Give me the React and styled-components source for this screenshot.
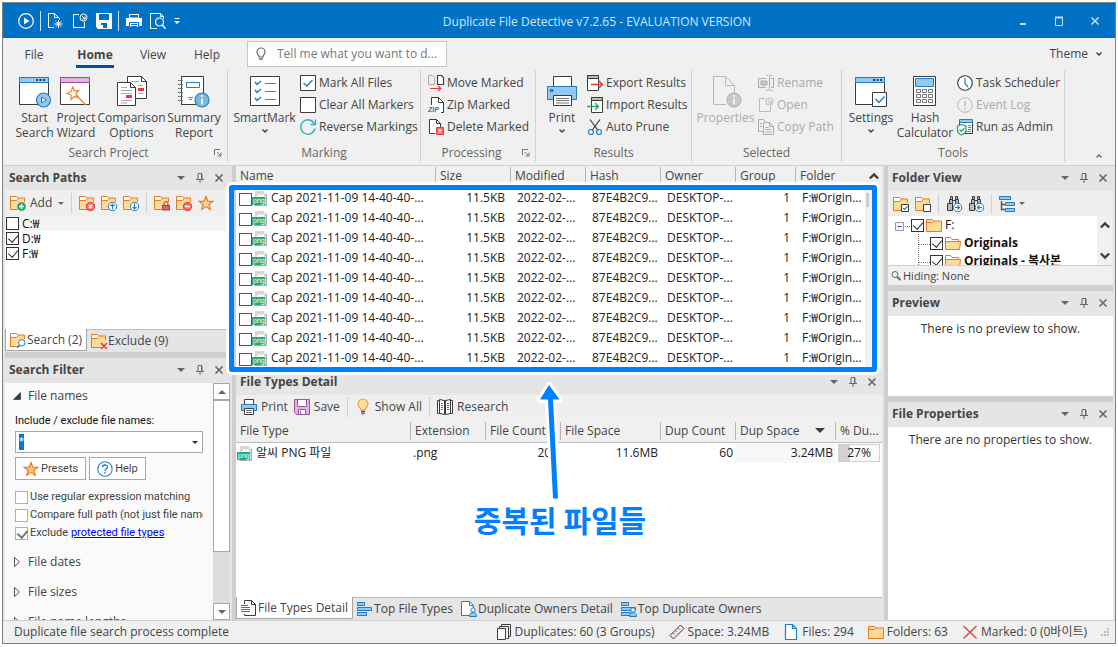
import React, { useState } from 'react';
import styled, { createGlobalStyle, css } from 'styled-components';

const GlobalStyle = createGlobalStyle`
    * {
        box-sizing: border-box;
    }
    body {
        margin: 0;
        background: #fff;
        color: #444;
        font: 12px/16px 'Open Sans', 'Noto Sans CJK KR', sans-serif;
    }
    button, input {
        font: inherit;
        color: inherit;
    }
    button {
        padding: 0;
        border: 0;
        background: none;
        white-space: nowrap;
    }
`;

const DARK = '#3b3b3b';
const BLUE = '#1e7fc4';
const SKY = '#94c8ec';
const ORANGE = '#e8792b';
const SAND = '#fbdb96';
const RED = '#e8383d';
const GREEN = '#2aa568';
const FADED = '#b9b9b9';

/* ---------- icons ---------- */

const Svg = styled.svg`
    display: block;
    flex: none;
    overflow: visible;
`;

const Icon = ({ size = 16, children, ...rest }) => (
    <Svg width={size} height={size} viewBox={`0 0 ${size} ${size}`} fill="none" stroke={DARK} aria-hidden="true" {...rest}>
        {children}
    </Svg>
);

const Caret = ({ color = '#666', width = 6, up }) => (
    <Svg width={width} height={width / 2} viewBox="0 0 6 3" aria-hidden="true">
        <path d={up ? 'M0 3h6L3 0z' : 'M0 0h6L3 3z'} fill={color} />
    </Svg>
);

const Chevron = ({ up, size = 6, color = DARK, weight = 1.4 }) => (
    <Svg width={size} height={size} viewBox="0 0 6 6" fill="none" stroke={color} strokeWidth={weight} aria-hidden="true">
        <path d={up ? 'M0.5 4.500L3 2l2.500 2.500' : 'M0.5 1.500L3 4l2.500-2.500'} />
    </Svg>
);

const FolderShape = () => (
    <>
        <path d="M.5 14.500v-13h6l1.500 1.500h6.500v9.500" fill={SAND} />
        <path d="M1 2h5.500l1 1.500-1 1.500H1z" fill="#fff" stroke="none" />
        <path d="M10 14.500H.5v-13h6l1.500 1.500h6.500v4M.5 5.500h6L8 3.500" stroke={ORANGE} />
    </>
);

const FolderIcon = ({ badge }) => (
    <Icon stroke="none">
        <FolderShape />
        {badge === 'add' && <><circle cx="11.500" cy="11.500" r="4.700" fill={GREEN} stroke="#efefef" strokeWidth=".6" /><path d="M11.500 9v5M9 11.500h5" stroke="#fff" strokeWidth="1.300" /></>}
        {badge === 'delete' && <><circle cx="11.500" cy="11.500" r="4.200" fill="#ee6a6d" stroke={RED} /><path d="M9.800 9.800l3.400 3.400M13.200 9.800l-3.400 3.400" stroke="#fff" strokeWidth="1.400" /></>}
        {badge === 'minus' && <><circle cx="11.500" cy="11.500" r="4.200" fill="#ee6a6d" stroke={RED} /><path d="M9 11.500h5" stroke="#fff" strokeWidth="1.600" /></>}
        {badge === 'up' && <><circle cx="11.500" cy="11.500" r="4.200" fill="#fff" stroke={BLUE} /><path d="M11.500 14.500v-5M9.500 11.200l2-2 2 2" stroke={BLUE} strokeWidth="1.200" /></>}
        {badge === 'down' && <><circle cx="11.500" cy="11.500" r="4.200" fill="#fff" stroke={BLUE} /><path d="M11.500 8.500v5M9.500 11.800l2 2 2-2" stroke={BLUE} strokeWidth="1.200" /></>}
        {badge === 'lock' && <><path d="M10 10.500v-2a2 2 0 0 1 4 0v2" stroke="#b5343c" /><path d="M8.500 10.500h7v4.500h-7z" fill="#d9676d" stroke="#b5343c" /></>}
        {badge === 'search' && <><circle cx="11.800" cy="10.800" r="3.200" fill="#fff" stroke={BLUE} /><path d="M9.500 13.200L7 15.700" stroke={BLUE} strokeWidth="1.300" /></>}
        {badge === 'cross' && <path d="M10 10l6 6M16 10l-6 6" stroke={RED} strokeWidth="1.500" />}
        {badge === 'checked' && <><path d="M8.500 8.500h7v7h-7z" fill="#fff" stroke={DARK} /><path d="M10 12l1.500 1.500 3-3.200" stroke={BLUE} strokeWidth="1.200" /></>}
        {badge === 'unchecked' && <path d="M8.500 8.500h7v7h-7z" fill="#fff" stroke={DARK} />}
    </Icon>
);

const OpenFolder = () => (
    <Icon>
        <path d="M.5 14.500v-12h5l1.500 2h6.500v2" fill="#fff" stroke={ORANGE} />
        <path d="M.5 14.500v-8h15l-1 8z" fill={SAND} stroke={ORANGE} />
    </Icon>
);

const ClosedFolder = () => (
    <Icon>
        <path d="M.5 14.500v-12h6l1.500 1.500h7.500v10.500z" fill={SAND} stroke={ORANGE} />
        <path d="M.5 5.500h6L8 4" fill="#fff" stroke={ORANGE} />
    </Icon>
);

const StarIcon = ({ fill = SAND }) => (
    <Icon><path d="M8 1.500l1.800 4.700 5 .2-3.900 3.100 1.400 4.900L8 11.600l-4.300 2.800 1.400-4.900L1.200 6.400l5-.2z" fill={fill} stroke={ORANGE} strokeWidth="1.200" /></Icon>
);

const PngIcon = () => (
    <Icon stroke="none">
        <path d="M3 0h9l3 3v12H3z" fill="#d6d6d6" />
        <path d="M12 0l3 3h-3z" fill="#f4f4f4" />
        <path d="M14 3h1v12H2v-1h12z" fill="#ababab" />
        <path d="M4 6l3-3 2 1 2-1 2 3z" fill="#fff" />
        <path d="M0 6h13v8H0z" fill="#22aa7c" />
        <text x="1" y="12" fontSize="7" fill="#fff" fontFamily="Liberation Sans, sans-serif">png</text>
    </Icon>
);

const PlayIcon = () => (
    <Icon stroke="#fff"><circle cx="8" cy="8" r="7.300" strokeWidth="1.200" /><path d="M6 4.500l5.500 3.500L6 11.500z" fill="#fff" stroke="none" /></Icon>
);
const NewIcon = () => (
    <Icon stroke="#fff"><path d="M6 14.500H.5v-14h6l5 5v1M6.500.5v4h4" /><path d="M10.500 7v8M6.500 11h8M7.700 8.200l5.600 5.600M13.300 8.200l-5.600 5.600" /></Icon>
);
const OpenIcon = ({ color = '#fff' }) => (
    <Icon stroke={color}><path d="M7 1.500H1.500v13h11V9" /><circle cx="11.500" cy="4.500" r="3.500" /><path d="M10 3l3 3M13 3.500V6h-2.500" /></Icon>
);
const SaveIcon = () => (
    <Icon stroke="none"><path d="M0 0h16v16H2l-2-2z" fill="#fff" /><path d="M3 1h10v6H3zM5 10h6v5H5z" fill="#0072c6" /><path d="M5 12h2v3H5z" fill="#fff" /></Icon>
);
const TitlePrintIcon = () => (
    <Icon stroke="none"><path d="M3.500 1.500h9V5h-9z" stroke="#fff" /><path d="M0 5h16v8H0z" fill="#fff" /><path d="M3.500 9.500h9v5h-9z" fill="#fff" stroke="#0072c6" /><path d="M5 11.500h6M5 13.500h6" stroke="#0072c6" /></Icon>
);
const PreviewIcon = () => (
    <Icon stroke="#fff"><path d="M7 15.500H.5V.5h10l3 3v2M10.500.5v3h3" /><circle cx="9.500" cy="9" r="4" strokeWidth="1.200" /><path d="M12.300 12l3.200 3.700" strokeWidth="1.400" /></Icon>
);

const WindowFrame = ({ top = SKY, line = BLUE, wide = 30 }) => (
    <>
        <path d={`M.5 2.500h${wide - 1}v27H.5z`} fill="#fff" />
        <path d={`M.5 2.500h${wide - 1}v5H.5z`} fill={top} stroke={line} />
    </>
);

const StartIcon = () => (
    <Icon size={32}>
        <WindowFrame />
        <path d="M17 5h2M20.500 5h2M24 5h2" strokeWidth="2" />
        <circle cx="24.500" cy="25" r="7" fill={SKY} stroke={BLUE} strokeWidth="1.200" />
        <path d="M22.500 22l5 3-5 3z" fill="#e7f3fb" stroke={BLUE} />
    </Icon>
);
const WizardIcon = () => (
    <Icon size={32}>
        <WindowFrame top="#dcb8dc" line="#a04fa2" />
        <path d="M13 12l1.500 4 4-.5-2.500 3.500 2 3.500-4-1-3 3v-4.500l-4-1.500 4-2z" fill="#fff" stroke="#f08a35" strokeWidth="1.300" />
        <path d="M16 20l10 10" stroke="#f08a35" strokeWidth="1.500" />
    </Icon>
);
const CompareIcon = () => (
    <Icon size={32}>
        <path d="M11.500 1.500h14l5 5v17h-19z" fill="#fff" /><path d="M25.500 1.500v5h5" />
        <path d="M15 6.500h8M22 10.500h5M22 18.500h5" stroke="#aaa" />
        <path d="M22 13h6v3h-6z" fill={RED} stroke="none" />
        <path d="M1.500 7.500h13l5 5v18h-18z" fill="#fff" /><path d="M14.500 7.500v5h5" />
        <path d="M5 12.500h6M5 15.500h11M5 18.500h11M5 25.500h11M5 28h6" stroke="#aaa" />
        <path d="M10 20h6v3h-6z" fill={RED} stroke="none" />
    </Icon>
);
const SummaryIcon = () => (
    <Icon size={32}>
        <path d="M2.500 1.500h23v28h-23z" fill="#fff" stroke="none" />
        <path d="M3 1.500h22.500v17M3 29.500h15M3.500 1.500v28" />
        <path d="M0 5.500h5M0 9.500h5M0 13.500h5M0 17.500h5M0 21.500h5M0 25.500h5" stroke="#777" />
        <path d="M8.500 7.500h13v5h-13z" stroke={BLUE} />
        <path d="M10 22.500h5M11 24.500h3" stroke="#777" />
        <circle cx="24" cy="25" r="7" fill="#7db8e0" stroke={BLUE} strokeWidth="1.200" />
        <path d="M24 20v2M24 23.500v6" stroke="#fff" strokeWidth="1.600" />
    </Icon>
);
const SmartMarkIcon = () => (
    <Icon size={32}>
        <path d="M1.500 1.500h29v29h-29z" fill="#fff" />
        <path d="M16 8.500h11M16 16.500h11M16 24.500h11" stroke="#777" />
        <path d="M6 7l2 2.500 4-3.500M6 15l2 2.500 4-3.500M6 23l2 2.500 4-3.500" stroke={BLUE} strokeWidth="1.500" />
    </Icon>
);
const BigPrintIcon = () => (
    <Icon size={32}>
        <path d="M7.500 1.500h18v11h-18z" fill="#fff" />
        <path d="M1.500 11.500h29v13h-29z" fill={SKY} stroke={BLUE} />
        <path d="M4.500 14.500h2v2h-2z" stroke="#0b558f" />
        <path d="M7.500 20.500h18v10h-18z" fill="#fff" />
        <path d="M10 23.500h13M10 25.500h13M10 28h13" stroke="#777" />
    </Icon>
);
const PropertiesIcon = () => (
    <Icon size={32} stroke={FADED}>
        <path d="M16 29.500H3.500v-28h12l9 9V17M15.500 1.500v9h9" />
        <circle cx="24" cy="25" r="7" fill="#c9c9c9" stroke="#aaa" />
        <path d="M24 20v2M24 23.500v6" stroke="#fff" strokeWidth="1.500" />
    </Icon>
);
const SettingsIcon = () => (
    <Icon size={32}>
        <WindowFrame top={SKY} />
        <path d="M18 5h2M21.500 5h2M25 5h2" strokeWidth="2" />
        <path d="M17.500 17.500h14v14h-14z" fill="#fff" />
        <path d="M20.500 24l3.500 3.500 5.500-6" stroke={BLUE} strokeWidth="1.500" />
    </Icon>
);
const CalcIcon = () => (
    <Icon size={32}>
        <path d="M4.500 1.500h22v29h-22z" fill="#fff" />
        <path d="M6.500 3.500h18v8h-18z" fill={SKY} stroke={BLUE} />
        {[14.5, 19.5, 24.5].map((y) => (
            <path key={y} d={`M7.500 ${y}h4v3h-4zM13.500 ${y}h4v3h-4zM19.500 ${y}h4v3h-4z`} stroke="#777" />
        ))}
    </Icon>
);

const BoxIcon = ({ checked }) => (
    <Icon><path d="M.5.5h15v15H.5z" fill="#fff" />{checked && <path d="M3.500 8l3.500 3 5.500-6" stroke={BLUE} strokeWidth="1.400" />}</Icon>
);
const ReverseIcon = () => (
    <Icon stroke="#2ab3c4"><path d="M14.500 5A7.200 7.200 0 1 0 15 9.500" strokeWidth="1.400" /><path d="M15.500.5v5h-5" strokeWidth="1.400" /></Icon>
);
const MoveIcon = () => (
    <Icon><path d="M.5.5h4l2 2v7h-6z" stroke="#aaa" /><path d="M9.500.5h4l2 2v7h-6z" fill="#fff" strokeWidth="1.200" /><path d="M2 13.500h10M10 11l2.800 2.500L10 16" stroke={RED} strokeWidth="1.200" /></Icon>
);
const ZipIcon = () => (
    <Icon><path d="M3.500 8V.5h7l5 5v10H11" fill="#fff" stroke="none" /><path d="M3.500 8V.5h7l5 5v10H13M10.500.5v5h5" /><text x="0" y="15" fontSize="7" fontWeight="700" fontStyle="italic" fill={BLUE} stroke="none" fontFamily="Liberation Sans, sans-serif">ZIP</text></Icon>
);
const DeleteIcon = () => (
    <Icon><path d="M7 14.500H1.500V.5h7l4 4V8M8.500.5v4h4" fill="#fff" /><path d="M8.500 8.500h7v7h-7z" fill="#ee6a6d" stroke={RED} /><path d="M10.500 10.500l3 3M13.500 10.500l-3 3" stroke="#fff" strokeWidth="1.200" /></Icon>
);
const ExportIcon = ({ incoming }) => (
    <Icon>
        <path d={incoming ? 'M4.500.5h11v15h-11z' : 'M.5.5h11v15H.5z'} fill="#fff" />
        <path d={incoming ? 'M4.500.5h11v3h-11z' : 'M.5.5h11v3H.5z'} fill="#bbb" />
        {incoming
            ? <path d="M0 9.500h11M8 6l3.500 3.500L8 13" stroke={GREEN} strokeWidth="1.300" />
            : <path d="M4 9.500h11M12 6l3.500 3.500L12 13" stroke={RED} strokeWidth="1.300" />}
    </Icon>
);
const ScissorsIcon = () => (
    <Icon><path d="M3 .5l8 11M13 .5l-8 11" strokeWidth="1.200" /><circle cx="4" cy="13" r="2.500" stroke={BLUE} strokeWidth="1.200" /><circle cx="12" cy="13" r="2.500" stroke={BLUE} strokeWidth="1.200" /></Icon>
);
const RenameIcon = () => (
    <Icon stroke="#aaa"><path d="M8 3.500H.5v9H8M13 3.500h2.500v9H13M8.500 .5h2l1 1 1-1h2M11.500 1.500v13M8.500 15.500h2l1-1 1 1h2" /><path d="M3 6h6v4H3z" fill="#c9c9c9" /></Icon>
);
const CopyIcon = () => (
    <Icon stroke="#aaa"><path d="M5 12.500H.5v-12h5l2 2v1" /><path d="M5.500 3.500h6l4 4v8h-10zM11.500 3.500v4h4" fill="#f0f0f0" /><path d="M2 4.500h2M2 7.500h2M7.500 8.500h3M7.500 10.500h6M7.500 13h6" /></Icon>
);
const ClockIcon = () => (
    <Icon><circle cx="8" cy="8" r="7.300" fill="#fff" strokeWidth="1.100" /><path d="M8 3v5.500l3 3.500" stroke={BLUE} strokeWidth="1.200" /></Icon>
);
const EventIcon = () => (
    <Icon stroke={FADED}><circle cx="8" cy="8" r="7.300" /><path d="M8 4v5M8 10.500v2" strokeWidth="1.400" /></Icon>
);
const AdminIcon = () => (
    <Icon>
        <path d="M2.500 1.500h13v13h-13z" fill="#fff" /><path d="M2.500.5h13v3h-13z" fill={SKY} stroke={BLUE} /><path d="M11 6.500h3M11 8.500h3M11 10.500h3M9 12.500h5" stroke="#777" />
        <path d="M4.500 5.500L9 7v4c0 2.500-2 4-4.500 5C2 15 .5 13.500.5 11V7z" fill="#fff" stroke={GREEN} strokeWidth="1.300" /><path d="M2.500 10.500l1.800 1.800 3-3.300" stroke={GREEN} strokeWidth="1.300" />
    </Icon>
);
const PrintIcon = () => (
    <Icon><path d="M3.500.5h9v5h-9z" fill="#fff" /><path d="M.5 5.500h15v6H.5z" fill={SKY} stroke={BLUE} /><path d="M3.500 9.500h9v6h-9z" fill="#fff" /><path d="M5 11.500h6M5 13.500h6" stroke="#777" /></Icon>
);
const SavePurple = () => (
    <Icon stroke="#a04fa2"><path d="M.5.5h15v15h-13l-2-2z" fill="#dcb8dc" /><path d="M3.500.5h9v7h-9zM4.500 10.500h7v5h-7z" fill="#fff" /><path d="M6.500 12v3" /></Icon>
);
const BulbIcon = () => (
    <Icon stroke="#f0a04b"><path d="M6 11c0-2-3-3-3-6a5 5 0 0 1 10 0c0 3-3 4-3 6z" fill="#ffdf9a" strokeWidth="1.200" /><path d="M6 12.500h4M6.500 14.500h3" stroke="#555" strokeWidth="1.400" /></Icon>
);
const OutlineBulb = () => (
    <Icon stroke="#666"><path d="M6 11c0-2-2-2.500-2-5a4 4 0 0 1 8 0c0 2.500-2 3-2 5z" strokeWidth="1.200" /><path d="M6 13h4" strokeWidth="1.400" /></Icon>
);
const BookIcon = () => (
    <Icon><path d="M.5 1.500h15v13H.5z" fill="#fff" /><path d="M2.500.5l5 1v14l-5-1zM13.500.5l-5 1v14l5-1z" fill="#fff" /><path d="M4 4.500h2M4 6.500h2M4 8.500h2M4 10.500h2M10 4.500h2M10 6.500h2M10 8.500h2M10 10.500h2" stroke={BLUE} /></Icon>
);
const BinocularsIcon = ({ back }) => (
    <Icon>
        <path d="M3.500 3.500h3v4h-3zM9.500 3.500h3v4h-3zM4.500.5h2v3h-2zM9.500.5h2v3h-2zM1.500 7.500h5v7h-5zM9.500 7.500h4v7h-4zM6.500 4.500h3" fill="#bbb" />
        <circle cx="11.500" cy="11.500" r="4.200" fill="#fff" stroke={BLUE} />
        <path d={back ? 'M14 11.500H9.500M11.500 9.500l-2 2 2 2' : 'M9 11.500h4.500M11.500 9.500l2 2-2 2'} stroke={BLUE} strokeWidth="1.200" />
    </Icon>
);
const TreeIcon = () => (
    <Icon stroke={BLUE}><path d="M2.500 5v9.500M2.500 8.500h4M2.500 13.500h4" stroke="#555" strokeWidth="1.500" /><path d="M.5.5h11v3H.5zM6.500 6.500h9v3h-9zM6.500 12.500h9v3h-9z" fill={SKY} /></Icon>
);
const ReportIcon = () => (
    <Icon><path d="M3.500 4V.5h7l4 4v11h-11V14M10.500.5v4h4" /><path d="M0 5.500h7M0 7.500h9M0 9.500h9M0 11.500h9" stroke={BLUE} /></Icon>
);
const BarsIcon = ({ person }) => (
    <Icon stroke={BLUE}><path d="M.5 1.500h7v3h-7zM.5 6.500h14v3H.5zM.5 11.500h9v3h-9z" fill={SKY} />{person && <Person />}</Icon>
);
const Person = () => (
    <><path d="M8.500 15.500c0-3 1.500-4 3.500-4s3.500 1 3.500 4z" fill={SKY} stroke={BLUE} /><circle cx="12" cy="9" r="2.200" fill="#fff" stroke={BLUE} /></>
);
const OwnerIcon = () => (
    <Icon stroke={BLUE}><path d="M8 14.500H.5V.5h8l4 4V7" fill="#fff" /><path d="M8.500.5v4h4" /><Person /></Icon>
);
const PagesIcon = () => (
    <Icon><path d="M5.500 2.500V.5h9v12h-2M3.500 4.500v-2h9v12h-2" /><path d="M1.500 4.500h8v11h-8z" fill="#fff" /></Icon>
);
const RulerIcon = () => (
    <Icon><path d="M1 11.500L11.500 1 15 4.500 4.500 15z" fill="#f3e4ee" /><path d="M4 9l1.500 1.500M6.500 6.500L8 8M9 4l1.500 1.500" stroke="#a04fa2" /></Icon>
);
const PageIcon = () => (
    <Icon stroke={BLUE}><path d="M2.500.5h7l4 4v11h-11zM9.500.5v4h4" fill="#fff" strokeWidth="1.200" /></Icon>
);
const CrossIcon = () => (
    <Icon stroke={RED}><path d="M1.500 2l13 12.500M14.500 2l-13 12.500" strokeWidth="1.300" /></Icon>
);
const HelpIcon = () => (
    <Icon stroke={BLUE}><circle cx="8" cy="8" r="7.200" fill="#fff" strokeWidth="1.100" /><path d="M5.500 6.200C5.500 3.300 10.500 3.300 10.500 6c0 1.700-2.500 1.800-2.500 4M8 11v1.600" strokeWidth="1.300" /></Icon>
);
const Magnifier = () => (
    <Icon size={10} stroke="#666"><circle cx="4" cy="3.500" r="3" /><path d="M6 5.800L9.500 9" strokeWidth="2" /></Icon>
);
const Pin = () => (
    <Icon size={10} stroke="#666"><path d="M3 1v5M7 1v5M3 .5h4M1 6.500h8M5 7v3M6.500 1v5" /></Icon>
);
const Cross = ({ color = '#666' }) => (
    <Icon size={10} stroke={color}><path d="M1.500 1.500l7 7M8.500 1.500l-7 7" strokeWidth="1.600" /></Icon>
);
const Launcher = () => (
    <Icon size={8} stroke="#777"><path d="M.5 6V.5H6M3 3l3.500 3.500M7 3.500V7H3.500" /></Icon>
);

/* ---------- shell ---------- */

const Page = styled.div`
    height: 100vh;
    padding: 2px 2px 3px;
`;

const Window = styled.div`
    display: flex;
    flex-direction: column;
    height: 100%;
    border: 1px solid #7f7f7f;
    background: #f0f0f0;
`;

const TitleBar = styled.header`
    display: flex;
    align-items: center;
    flex: none;
    height: 35px;
    padding-right: 2px;
    background: #0072c6;
    color: #d4e6f6;
`;

const QuickAccess = styled.div`
    display: flex;
    align-items: center;
    width: 186px;
    height: 32px;
    padding-left: 11px;

    > * {
        flex: none;
    }
`;

const QuickButton = styled.button`
    display: grid;
    place-items: center;
    width: ${(p) => (p.$narrow ? 14 : 24)}px;
    height: 24px;
`;

const QuickLine = styled.span`
    width: 1px;
    height: 20px;
    margin: 0 3px 0 2px;
    background: #cfe3f4;
`;

const Caption = styled.h1`
    flex: 1;
    margin: 0;
    padding-top: 2px;
    font-size: 12px;
    font-weight: 400;
    text-align: center;
`;

const CaptionButton = styled.button`
    display: grid;
    place-items: center;
    width: 36px;
    height: 35px;
`;

const TabRow = styled.nav`
    display: flex;
    align-items: center;
    flex: none;
    height: 32px;
    padding: 0 13px 0 10px;
`;

const RibbonTab = styled.button`
    width: ${(p) => p.$width}px;
    height: 27px;
    text-align: center;

    span {
        display: inline-block;
        padding: 6px 1px 2px;
        border-bottom: 3px solid transparent;
    }

    ${(p) => p.$active && css`
        font-weight: 700;
        span {
            border-color: #00539b;
        }
    `}
`;

const TellMe = styled.label`
    display: flex;
    align-items: center;
    gap: 8px;
    width: 200px;
    height: 26px;
    margin-left: 4px;
    padding: 0 5px;
    border: 1px solid #c6c6c6;
    background: #fff;

    input {
        flex: 1;
        min-width: 0;
        border: 0;
        padding: 0;
        outline: 0;
        background: none;
        text-overflow: ellipsis;
    }
    input::placeholder {
        color: #777;
        opacity: 1;
    }
`;

const ThemeButton = styled.button`
    display: flex;
    align-items: center;
    gap: 8px;
    margin-left: auto;
`;

const RibbonBar = styled.div`
    display: flex;
    flex: none;
    height: 96px;
    padding-bottom: 3px;
    border-bottom: 1px solid #cfcfcf;
`;

const Group = styled.section`
    display: flex;
    flex-direction: column;
    width: ${(p) => p.$width}px;
    border-right: 1px solid #d2d2d2;
`;

const GroupBody = styled.div`
    display: flex;
    height: 73px;
    padding: 2px 0 0 ${(p) => (p.$wide ? 11 : 4)}px;
`;

const GroupLabel = styled.div`
    display: flex;
    align-items: center;
    height: 19px;
    padding-right: ${(p) => (p.$launcher ? 5 : 0)}px;
    color: #666;

    span {
        flex: 1;
        text-align: center;
    }
`;

const BigButton = styled.button`
    display: flex;
    flex-direction: column;
    align-items: center;
    width: ${(p) => p.$width}px;
    padding-top: 3px;
    line-height: 15px;
    white-space: pre;
    color: ${(p) => (p.disabled ? '#aaa' : 'inherit')};

    > span {
        margin: 3px 0;
    }
`;

const SmallColumn = styled.div`
    padding-left: 3px;
`;

const SmallButton = styled.button`
    display: flex;
    align-items: center;
    gap: 3px;
    height: 22px;
    color: ${(p) => (p.disabled ? '#aaa' : 'inherit')};
`;

const RibbonEnd = styled.div`
    display: flex;
    flex: 1;
    align-items: flex-end;
    justify-content: flex-end;
    padding: 0 13px 3px 0;
`;

const Workspace = styled.main`
    display: grid;
    grid-template-columns: 229px 4px minmax(0, 1fr) 2px 4px 225px 2px;
    flex: 1;
    min-height: 0;
    background: #e5e5e5;
`;

const Splitter = styled.div`
    background: #cfcfcf;
    height: ${(p) => (p.$horizontal ? '6px' : 'auto')};
    flex: none;
`;

const Column = styled.div`
    display: flex;
    flex-direction: column;
    min-width: 0;
    min-height: 0;
`;

const PaneTitle = styled.header`
    display: flex;
    align-items: center;
    flex: none;
    height: ${(p) => p.$height || 25}px;
    padding: 0 1px 1px 4px;
    background: #e5e5e5;

    h2 {
        flex: 1;
        margin: 0;
        font-size: 12px;
        font-weight: 700;
    }
    button {
        display: grid;
        place-items: center;
        width: 19px;
        height: 20px;
    }
`;

const LeftColumn = styled(Column)`
    padding-left: 2px;

    ${Splitter} {
        margin-right: 6px;
    }
    ${PaneTitle} {
        padding-right: 4px;
    }
`;

const Toolbar = styled.div`
    display: flex;
    align-items: center;
    flex: none;
    height: ${(p) => p.$height || 25}px;
    margin-right: ${(p) => p.$inset || 0}px;
    padding-left: 2px;
    background: #efefef;

    > * {
        flex: none;
    }
`;

const ToolButton = styled.button`
    display: flex;
    align-items: center;
    gap: 4px;
    height: 22px;
    padding: 0 3px;
`;

const ToolLine = styled.span`
    width: 1px;
    height: 20px;
    margin: 0 4px;
    background: #d0d0d0;
`;

const CheckBox = styled.input.attrs({ type: 'checkbox' })`
    appearance: none;
    position: relative;
    flex: none;
    width: 13px;
    height: 13px;
    margin: 0;
    border: 1px solid ${(p) => (p.$soft ? '#b0b0b0' : '#333')};
    background: #fff;

    &:checked::after {
        content: '';
        position: absolute;
        left: 3px;
        top: 0;
        width: 5px;
        height: 8px;
        border: solid ${(p) => (p.$soft ? '#777' : '#333')};
        border-width: 0 ${(p) => (p.$soft ? '2px 2px' : '1px 1px')} 0;
        transform: rotate(40deg);
    }
`;

const PathList = styled.div`
    flex: none;
    height: 113px;
    margin-right: 6px;
    background: #fff;
`;

const PathRow = styled.label`
    display: flex;
    align-items: center;
    gap: 3px;
    height: 15px;
    padding-left: 1px;
    color: #111;
    background: ${(p) => (p.$hover ? '#f4f4f4' : 'none')};
`;

const TabStrip = styled.div`
    display: flex;
    flex: none;
    height: 23px;
    margin-right: ${(p) => p.$inset || 0}px;
    border-top: 1px solid #bdbdbd;
`;

const StripTab = styled.button`
    display: flex;
    align-items: center;
    gap: 1px;
    height: 21px;
    padding: 0 4px;

    ${(p) => p.$active && css`
        margin-top: -1px;
        height: 22px;
        border: solid #a5a5a5;
        border-width: 0 1px 1px;
        background: #fff;
    `}
`;

/* ---------- filter pane ---------- */

const FilterArea = styled.div`
    display: flex;
    flex: 1;
    min-height: 0;
    margin-right: 2px;
`;

const FilterBody = styled.div`
    display: flex;
    flex-direction: column;
    gap: 4px;
    flex: 1;
    min-width: 0;
    overflow: hidden;
    background: #fafafa;
    padding: 0 10px 0 8px;
`;

const FilterHeading = styled.button`
    display: flex;
    align-items: center;
    flex: none;
    gap: 5px;
    height: 26px;
`;

const FilterSection = styled.div`
    flex: none;
    margin-left: 2px;
    padding-bottom: 3px;
    font-family: Roboto, 'Open Sans', sans-serif;
    font-size: 11px;
    overflow: hidden;
`;

const FieldLabel = styled.label`
    display: block;
    color: #111;
`;

const Combo = styled.div`
    display: flex;
    align-items: center;
    height: 22px;
    margin: 2px 0 4px;
    padding: 0 4px 0 3px;
    border: 1px solid #a8a8a8;
    background: #fff;

    input {
        flex: 1;
        min-width: 0;
        padding: 0;
        border: 0;
        outline: 0;
        caret-color: transparent;
    }
    input::selection {
        background: #0078d7;
        color: #fff;
    }
`;

const ButtonRow = styled.div`
    display: flex;
    gap: 3px;
    margin-bottom: 8px;
`;

const PushButton = styled.button`
    display: flex;
    align-items: center;
    gap: 2px;
    height: 23px;
    padding: 0 7px;
    border: 1px solid #a8a8a8;
    background: #fff;
`;

const Option = styled.label`
    display: flex;
    align-items: center;
    gap: 2px;
    height: 18px;
    white-space: nowrap;

    a {
        color: #00f;
    }
`;

const ScrollTrack = styled.div`
    display: flex;
    flex-direction: column;
    width: 17px;
    background: #dcdcdc;
`;

const ScrollButton = styled.button`
    display: grid;
    place-items: center;
    flex: none;
    height: 17px;
    border: 1px solid #a8a8a8;
    background: #fff;

    ${(p) => p.$end && css`
        margin-top: auto;
    `}
`;

const ScrollThumb = styled.div`
    height: 64%;
    border: 1px solid #a8a8a8;
    background: #fff;
`;

/* ---------- tables ---------- */

const ListPane = styled.div`
    position: relative;
    flex: none;
    height: 204px;
`;

const ListClip = styled.div`
    display: flex;
    height: 100%;
    overflow: hidden;
    background: #fff;
`;

const Grid = styled.table`
    flex: 1;
    width: 100%;
    align-self: flex-start;
    border-collapse: separate;
    border-spacing: 0;
    table-layout: fixed;

    th, td {
        overflow: hidden;
        white-space: nowrap;
        text-align: left;
        font-weight: 400;
    }
    th {
        height: ${(p) => p.$head}px;
        padding: 0 0 ${(p) => (p.$rule ? 0 : 2)}px 4px;
        background: #f0f0f0;
        border-bottom: ${(p) => (p.$rule ? '1px solid #bdbdbd' : 0)};
    }
    th + th {
        padding-left: 0;
    }
    th + th span {
        display: flex;
        align-items: center;
        justify-content: space-between;
        height: 18px;
        padding: 0 10px 0 4px;
        border-left: 1px solid #b5b5b5;
    }
    th + th:last-child span {
        padding-right: 0;
    }
    td {
        height: ${(p) => p.$row}px;
        padding: 0 0 0 7px;
        color: #222;
    }
    td + td {
        padding-left: ${(p) => (p.$rule ? 3 : 7)}px;
    }
    td:first-child {
        padding-left: ${(p) => p.$lead}px;
    }
    td.number {
        padding-right: ${(p) => p.$tail}px;
        text-align: right;
    }
`;

const FileCell = styled.div`
    display: flex;
    align-items: center;
    gap: 3px;

    svg {
        margin-top: 2px;
    }
    input {
        margin: 2px -3px 0 0;
        border-color: #555;
    }
`;

const ListScroll = styled.div`
    display: flex;
    flex-direction: column;
    align-items: flex-start;
    width: 17px;
    background: #f0f0f0;

    button {
        display: grid;
        place-items: center;
        width: 17px;
        height: 20px;
    }
    i {
        width: 3px;
        height: 14px;
        margin: 7px 1px;
        background: #cdcdcd;
    }
`;

const DetailPane = styled.section`
    position: relative;
    display: flex;
    flex-direction: column;
    flex: 1;
    min-height: 0;
`;

const DetailBody = styled.div`
    flex: 1;
    min-height: 0;
    background: #fff;
`;

const Shaded = styled.td`
    background: #f8f8f8;
`;

const Meter = styled.div`
    position: relative;
    margin-right: 2px;
    height: 18px;
    line-height: 16px;
    border: 1px solid #d0d0d0;
    background: #fafafa;
    text-align: center;

    i {
        position: absolute;
        left: 0;
        top: 0;
        bottom: 0;
        background: #d2d2d2;
    }
    span {
        position: relative;
    }
`;

const HighlightBox = styled.div`
    position: absolute;
    z-index: 2;
    left: -7px;
    right: 5px;
    top: 19px;
    bottom: -2px;
    border: 5px solid #0080ff;
    border-radius: 3px;
    box-shadow: 0 0 0 3px #fff;
    pointer-events: none;
`;

const Callout = styled.div`
    position: absolute;
    z-index: 3;
    left: 235px;
    top: 12px;
    width: 178px;
    color: #0080ff;
    font: 700 30px/30px 'Noto Sans CJK KR', sans-serif;
    text-align: center;
    white-space: nowrap;
    pointer-events: none;

    svg {
        margin: 0 auto;
    }
`;

/* ---------- right column ---------- */

const Tree = styled.div`
    display: flex;
    flex: none;
    height: 49px;
    overflow: hidden;
    background: #fff;
`;

const TreeRows = styled.div`
    flex: 1;
    color: #111;
`;

const TreeRow = styled.label`
    display: flex;
    align-items: center;
    height: 18px;
    padding-left: ${(p) => (p.$child ? 30 : 7)}px;
    font-weight: ${(p) => (p.$child ? 700 : 400)};
    white-space: nowrap;

    ${CheckBox} {
        margin-right: 2px;
    }
    svg + span {
        margin-left: 3px;
    }
`;

const TreeScroll = styled.div`
    display: flex;
    flex-direction: column;
    justify-content: space-between;
    width: 16px;
    padding: 4px 3px;
    background: #f0f0f0;
`;

const Hiding = styled.div`
    display: flex;
    align-items: center;
    gap: 2px;
    flex: none;
    height: 20px;
    padding-left: 3px;
    border-top: 1px solid #cfcfcf;
    background: #f0f0f0;
    font-size: 11px;
`;

const EmptyPane = styled.div`
    flex: ${(p) => (p.$height ? 'none' : 1)};
    height: ${(p) => (p.$height ? `${p.$height}px` : 'auto')};
    padding-top: 5px;
    background: #fff;
    color: #333;
    text-align: center;
`;

const StatusBar = styled.footer`
    display: flex;
    align-items: center;
    flex: none;
    height: 23px;
    padding: 0 6px 0 11px;
    border-top: 1px solid #cfcfcf;
    background: #f0f0f0;
`;

const StatusItem = styled.span`
    display: flex;
    align-items: center;
    gap: 3px;
    margin-left: ${(p) => (p.$first ? 'auto' : '14px')};
`;

/* ---------- data ---------- */

const RIBBON = [
    {
        label: 'Search Project', width: 225, launcher: true, wide: true,
        big: [
            { icon: <StartIcon />, text: 'Start\nSearch', width: 41 },
            { icon: <WizardIcon />, text: 'Project\nWizard', width: 42 },
            { icon: <CompareIcon />, text: 'Comparison\nOptions', width: 69 },
            { icon: <SummaryIcon />, text: 'Summary\nReport', width: 56 },
        ],
    },
    {
        label: 'Marking', width: 193,
        big: [{ icon: <SmartMarkIcon />, text: 'SmartMark', width: 65, menu: true }],
        small: [
            { icon: <BoxIcon checked />, text: 'Mark All Files' },
            { icon: <BoxIcon />, text: 'Clear All Markers' },
            { icon: <ReverseIcon />, text: 'Reverse Markings' },
        ],
    },
    {
        label: 'Processing', width: 115, launcher: true,
        small: [
            { icon: <MoveIcon />, text: 'Move Marked' },
            { icon: <ZipIcon />, text: 'Zip Marked' },
            { icon: <DeleteIcon />, text: 'Delete Marked' },
        ],
    },
    {
        label: 'Results', width: 156,
        big: [{ icon: <BigPrintIcon />, text: 'Print', width: 44, menu: true }],
        small: [
            { icon: <ExportIcon />, text: 'Export Results' },
            { icon: <ExportIcon incoming />, text: 'Import Results' },
            { icon: <ScissorsIcon />, text: 'Auto Prune' },
        ],
    },
    {
        label: 'Selected', width: 150,
        big: [{ icon: <PropertiesIcon />, text: 'Properties', width: 59, off: true }],
        small: [
            { icon: <RenameIcon />, text: 'Rename', off: true },
            { icon: <OpenIcon color={FADED} />, text: 'Open', off: true },
            { icon: <CopyIcon />, text: 'Copy Path', off: true },
        ],
    },
    {
        label: 'Tools', width: 223,
        big: [
            { icon: <SettingsIcon />, text: 'Settings', width: 50, menu: true },
            { icon: <CalcIcon />, text: 'Hash\nCalculator', width: 58 },
        ],
        small: [
            { icon: <ClockIcon />, text: 'Task Scheduler' },
            { icon: <EventIcon />, text: 'Event Log', off: true },
            { icon: <AdminIcon />, text: 'Run as Admin' },
        ],
    },
];

const FILES = Array.from({ length: 9 }, (_, id) => ({
    id,
    name: 'Cap 2021-11-09 14-40-40-...',
    size: '11.5KB',
    modified: '2022-02-...',
    hash: '87E4B2C9...',
    owner: 'DESKTOP-...',
    group: 1,
    folder: 'F:₩Origin...',
}));

/* ---------- parts ---------- */

const Pane = ({ title, height }) => (
    <PaneTitle $height={height}>
        <h2>{title}</h2>
        <button aria-label={`${title} menu`}><Caret width={8} /></button>
        <button aria-label={`Pin ${title}`}><Pin /></button>
        <button aria-label={`Close ${title}`}><Cross /></button>
    </PaneTitle>
);

const RibbonGroup = ({ group }) => (
    <Group $width={group.width}>
        <GroupBody $wide={group.wide}>
            {(group.big || []).map((b) => (
                <BigButton key={b.text} $width={b.width} disabled={b.off}>
                    {b.icon}
                    <span>{b.text}</span>
                    {b.menu && <Chevron />}
                </BigButton>
            ))}
            {group.small && (
                <SmallColumn>
                    {group.small.map((b) => (
                        <SmallButton key={b.text} disabled={b.off}>{b.icon}{b.text}</SmallButton>
                    ))}
                </SmallColumn>
            )}
        </GroupBody>
        <GroupLabel $launcher={group.launcher}>
            <span>{group.label}</span>
            {group.launcher && <button aria-label={`${group.label} options`}><Launcher /></button>}
        </GroupLabel>
    </Group>
);

const PathItem = ({ path, on, hover }) => {
    const [checked, setChecked] = useState(!!on);
    return (
        <PathRow $hover={hover}>
            <CheckBox checked={checked} onChange={(e) => setChecked(e.target.checked)} />
            {path}
        </PathRow>
    );
};

const Arrow = () => (
    <Svg width="40" height="122" viewBox="0 0 40 122" aria-hidden="true">
        <path d="M9 3l10.500 14.500H13l5 99h-5l-5-99H0z" fill="#0080ff" stroke="#fff" strokeWidth="6" strokeLinejoin="round" paintOrder="stroke" />
    </Svg>
);

const Disclosure = ({ open }) => (
    <Icon size={10} stroke="#555">
        {open ? <path d="M7.500 1.500v7h-7z" fill={DARK} /> : <path d="M1.500.5l5 4.500-5 4.500z" fill="#fff" />}
    </Icon>
);

export default function App() {
    return (
        <Page>
            <GlobalStyle />
            <Window>
                <TitleBar>
                    <QuickAccess>
                        <QuickButton aria-label="Start search"><PlayIcon /></QuickButton>
                        <QuickLine />
                        <QuickButton aria-label="New project"><NewIcon /></QuickButton>
                        <QuickButton aria-label="Open project"><OpenIcon /></QuickButton>
                        <QuickButton aria-label="Save project"><SaveIcon /></QuickButton>
                        <QuickLine />
                        <QuickButton aria-label="Print"><TitlePrintIcon /></QuickButton>
                        <QuickButton aria-label="Print preview"><PreviewIcon /></QuickButton>
                        <QuickButton $narrow aria-label="Customize toolbar">
                            <Icon size={6} stroke="#fff"><path d="M.5.500h5" /><path d="M0 3h6L3 6z" fill="#fff" stroke="none" /></Icon>
                        </QuickButton>
                    </QuickAccess>
                    <Caption>Duplicate File Detective v7.2.65 - EVALUATION VERSION</Caption>
                    <CaptionButton aria-label="Minimize"><Icon size={10} stroke="#c3d9ec"><path d="M2 8h6" strokeWidth="2" /></Icon></CaptionButton>
                    <CaptionButton aria-label="Maximize"><Icon size={10} stroke="#c3d9ec"><path d="M1 1.500h8M1.500 1v8.500h7V1" /><path d="M1 1.500h8" strokeWidth="2" /></Icon></CaptionButton>
                    <CaptionButton aria-label="Close"><Cross color="#c3d9ec" /></CaptionButton>
                </TitleBar>

                <TabRow>
                    <RibbonTab $width={42}><span>File</span></RibbonTab>
                    <RibbonTab $width={80} $active><span>Home</span></RibbonTab>
                    <RibbonTab $width={36}><span>View</span></RibbonTab>
                    <RibbonTab $width={72}><span>Help</span></RibbonTab>
                    <TellMe>
                        <OutlineBulb />
                        <input aria-label="Tell me" placeholder="Tell me what you want to d..." />
                    </TellMe>
                    <ThemeButton>Theme <Chevron size={6} /></ThemeButton>
                </TabRow>

                <RibbonBar>
                    {RIBBON.map((group) => <RibbonGroup key={group.label} group={group} />)}
                    <RibbonEnd><button aria-label="Collapse ribbon"><Chevron up color="#666" /></button></RibbonEnd>
                </RibbonBar>

                <Workspace>
                    <LeftColumn>
                        <Pane title="Search Paths" height={24} />
                        <Toolbar $height={26} $inset={6}>
                            <ToolButton><FolderIcon badge="add" />Add</ToolButton>
                            <ToolButton aria-label="Add options"><Caret /></ToolButton>
                            <ToolLine />
                            <ToolButton aria-label="Remove path"><FolderIcon badge="delete" /></ToolButton>
                            <ToolButton aria-label="Move up"><FolderIcon badge="up" /></ToolButton>
                            <ToolButton aria-label="Move down"><FolderIcon badge="down" /></ToolButton>
                            <ToolLine />
                            <ToolButton aria-label="Protect path"><FolderIcon badge="lock" /></ToolButton>
                            <ToolButton aria-label="Exclude path"><FolderIcon badge="minus" /></ToolButton>
                            <ToolButton aria-label="Favorites"><StarIcon /></ToolButton>
                        </Toolbar>
                        <PathList>
                            <PathItem path="C:₩" hover />
                            <PathItem path="D:₩" on />
                            <PathItem path="F:₩" on />
                        </PathList>
                        <TabStrip $inset={6}>
                            <StripTab $active><FolderIcon badge="search" />Search (2)</StripTab>
                            <StripTab><FolderIcon badge="cross" />Exclude (9)</StripTab>
                        </TabStrip>
                        <Splitter $horizontal />
                        <Pane title="Search Filter" />
                        <FilterArea>
                            <FilterBody>
                                <FilterHeading><Disclosure open />File names</FilterHeading>
                                <FilterSection>
                                    <FieldLabel htmlFor="pattern">Include / exclude file names:</FieldLabel>
                                    <Combo>
                                        <input id="pattern" defaultValue="*" autoFocus onFocus={(e) => e.target.select()} />
                                        <button aria-label="Recent patterns"><Caret color="#333" /></button>
                                    </Combo>
                                    <ButtonRow>
                                        <PushButton><StarIcon fill="#fbc66b" />Presets</PushButton>
                                        <PushButton><HelpIcon />Help</PushButton>
                                    </ButtonRow>
                                    <Option><CheckBox $soft />Use regular expression matching</Option>
                                    <Option><CheckBox $soft />Compare full path (not just file name</Option>
                                    <Option><CheckBox $soft defaultChecked /><span>Exclude <a href="#types">protected file types</a></span></Option>
                                </FilterSection>
                                <FilterHeading><Disclosure />File dates</FilterHeading>
                                <FilterHeading><Disclosure />File sizes</FilterHeading>
                                <FilterHeading><Disclosure />File name lengths</FilterHeading>
                            </FilterBody>
                            <ScrollTrack>
                                <ScrollButton aria-label="Scroll up"><Caret width={8} up /></ScrollButton>
                                <ScrollThumb />
                                <ScrollButton $end aria-label="Scroll down"><Caret width={8} /></ScrollButton>
                            </ScrollTrack>
                        </FilterArea>
                    </LeftColumn>

                    <Splitter />

                    <Column>
                        <ListPane>
                            <ListClip>
                                <Grid $head={22} $row={20} $lead={3} $tail={5}>
                                    <colgroup>
                                        <col />
                                        <col width="75" />
                                        <col width="75" />
                                        <col width="75" />
                                        <col width="75" />
                                        <col width="60" />
                                        <col width="70" />
                                    </colgroup>
                                    <thead>
                                        <tr>
                                            {['Name', 'Size', 'Modified', 'Hash', 'Owner', 'Group', 'Folder'].map((h) => (
                                                <th key={h}><span>{h}</span></th>
                                            ))}
                                        </tr>
                                    </thead>
                                    <tbody>
                                        {FILES.map((f) => (
                                            <tr key={f.id}>
                                                <td>
                                                    <FileCell>
                                                        <CheckBox aria-label={`Mark ${f.name}`} />
                                                        <PngIcon />
                                                        <span>{f.name}</span>
                                                    </FileCell>
                                                </td>
                                                <td className="number">{f.size}</td>
                                                <td>{f.modified}</td>
                                                <td>{f.hash}</td>
                                                <td>{f.owner}</td>
                                                <td className="number">{f.group}</td>
                                                <td>{f.folder}</td>
                                            </tr>
                                        ))}
                                    </tbody>
                                </Grid>
                                <ListScroll>
                                    <button aria-label="Scroll up"><Chevron up size={10} /></button>
                                    <i />
                                </ListScroll>
                            </ListClip>
                            <HighlightBox />
                        </ListPane>

                        <DetailPane>
                            <Pane title="File Types Detail" />
                            <Toolbar $height={24}>
                                <ToolButton><PrintIcon />Print</ToolButton>
                                <ToolButton><SavePurple />Save</ToolButton>
                                <ToolLine />
                                <ToolButton><BulbIcon />Show All</ToolButton>
                                <ToolLine />
                                <ToolButton><BookIcon />Research</ToolButton>
                            </Toolbar>
                            <DetailBody>
                                <Grid $head={24} $row={20} $lead={1} $tail={2} $rule>
                                    <colgroup>
                                        <col />
                                        <col width="75" />
                                        <col width="75" />
                                        <col width="100" />
                                        <col width="75" />
                                        <col width="100" />
                                        <col width="47" />
                                    </colgroup>
                                    <thead>
                                        <tr>
                                            <th><span>File Type</span></th>
                                            <th><span>Extension</span></th>
                                            <th><span>File Count</span></th>
                                            <th><span>File Space</span></th>
                                            <th><span>Dup Count</span></th>
                                            <th><span>Dup Space <Caret width={10} color={DARK} /></span></th>
                                            <th><span>% Du...</span></th>
                                        </tr>
                                    </thead>
                                    <tbody>
                                        <tr>
                                            <td><FileCell><PngIcon />알씨 PNG 파일</FileCell></td>
                                            <td>.png</td>
                                            <td className="number">200</td>
                                            <td className="number">11.6MB</td>
                                            <td className="number">60</td>
                                            <Shaded className="number">3.24MB</Shaded>
                                            <td><Meter><i style={{ width: '27%' }} /><span>27%</span></Meter></td>
                                        </tr>
                                    </tbody>
                                </Grid>
                            </DetailBody>
                            <TabStrip>
                                <StripTab $active><ReportIcon />File Types Detail</StripTab>
                                <StripTab><BarsIcon />Top File Types</StripTab>
                                <StripTab><OwnerIcon />Duplicate Owners Detail</StripTab>
                                <StripTab><BarsIcon person />Top Duplicate Owners</StripTab>
                            </TabStrip>
                            <Callout>
                                <Arrow />
                                중복된 파일들
                            </Callout>
                        </DetailPane>
                    </Column>

                    <span />
                    <Splitter />

                    <Column>
                        <Pane title="Folder View" />
                        <Toolbar>
                            <ToolButton aria-label="Check all folders"><FolderIcon badge="checked" /></ToolButton>
                            <ToolButton aria-label="Uncheck all folders"><FolderIcon badge="unchecked" /></ToolButton>
                            <ToolLine />
                            <ToolButton aria-label="Find next"><BinocularsIcon /></ToolButton>
                            <ToolButton aria-label="Find previous"><BinocularsIcon back /></ToolButton>
                            <ToolLine />
                            <ToolButton aria-label="Tree options"><TreeIcon /><Caret /></ToolButton>
                        </Toolbar>
                        <Tree>
                            <TreeRows>
                                <TreeRow>
                                    <Svg width="16" height="18" viewBox="0 0 16 18" fill="none" aria-hidden="true">
                                        <path d="M.5 6.500h8v8h-8z" fill="#f6f6f6" stroke="#999" />
                                        <path d="M2.500 10.500h4" stroke="#2a5bb5" />
                                        <path d="M10 10.500h6" stroke="#777" strokeDasharray="1 1" />
                                    </Svg>
                                    <CheckBox defaultChecked />
                                    <ClosedFolder />
                                    <span>F:</span>
                                </TreeRow>
                                {['Originals', 'Originals - 복사본'].map((name) => (
                                    <TreeRow key={name} $child>
                                        <Svg width="12" height="18" viewBox="0 0 12 18" fill="none" aria-hidden="true">
                                            <path d="M.5 0v18M1 10.500h11" stroke="#777" strokeDasharray="1 1" />
                                        </Svg>
                                        <CheckBox defaultChecked />
                                        <OpenFolder />
                                        <span>{name}</span>
                                    </TreeRow>
                                ))}
                            </TreeRows>
                            <TreeScroll>
                                <button aria-label="Scroll up"><Chevron up size={10} /></button>
                                <button aria-label="Scroll down"><Chevron size={10} /></button>
                            </TreeScroll>
                        </Tree>
                        <Hiding><Magnifier />Hiding: None</Hiding>
                        <Splitter $horizontal />
                        <Pane title="Preview" />
                        <EmptyPane $height={80}>There is no preview to show.</EmptyPane>
                        <Splitter $horizontal />
                        <Pane title="File Properties" />
                        <EmptyPane>There are no properties to show.</EmptyPane>
                    </Column>
                </Workspace>

                <StatusBar>
                    <span>Duplicate file search process complete</span>
                    <StatusItem $first><PagesIcon />Duplicates: 60 (3 Groups)</StatusItem>
                    <StatusItem><RulerIcon />Space: 3.24MB</StatusItem>
                    <StatusItem><PageIcon />Files: 294</StatusItem>
                    <StatusItem><ClosedFolder />Folders: 63</StatusItem>
                    <StatusItem><CrossIcon />Marked: 0 (0바이트)</StatusItem>
                    <StatusItem>
                        <Icon size={8} stroke="#bbb" strokeWidth="2"><path d="M6 1h2M3 4h2M6 4h2M0 7h2M3 7h2M6 7h2" /></Icon>
                    </StatusItem>
                </StatusBar>
            </Window>
        </Page>
    );
}
